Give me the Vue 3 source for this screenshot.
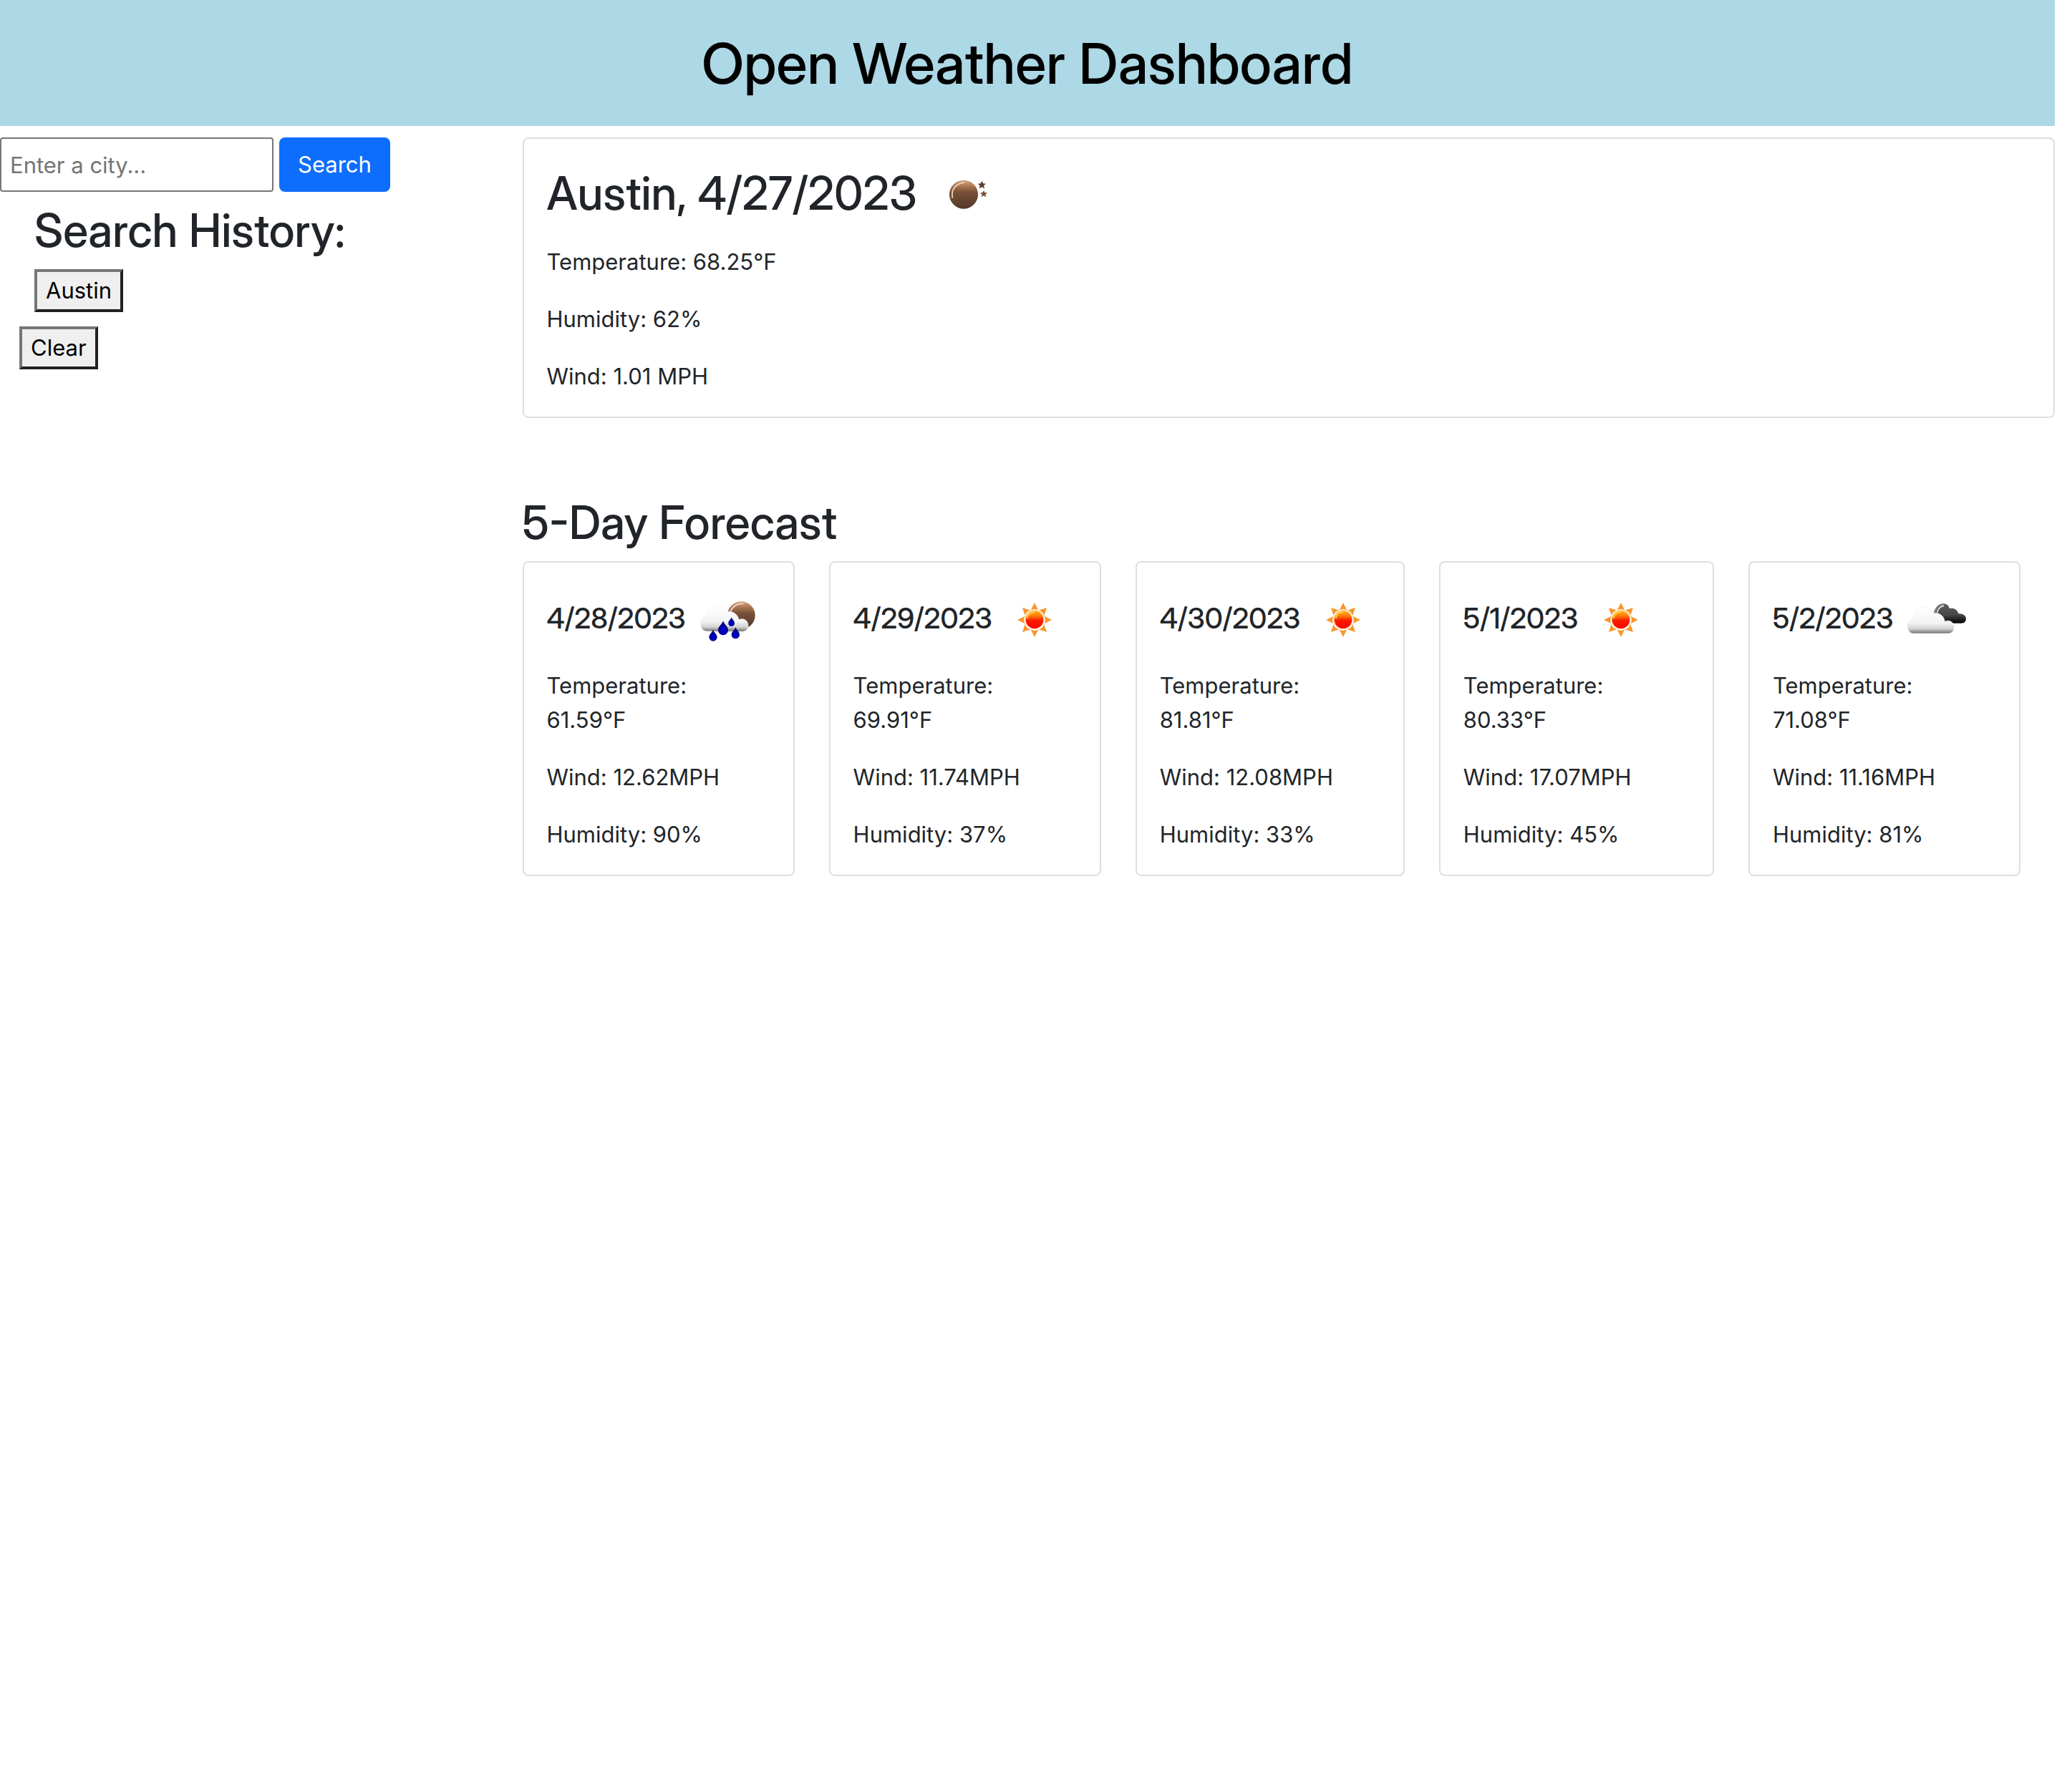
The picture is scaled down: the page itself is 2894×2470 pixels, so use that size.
<script setup>
import { ref } from 'vue'

const city = ref('')
const history = ref(['Austin'])

const current = { city: 'Austin', date: '4/27/2023', temp: '68.25', humidity: 62, wind: '1.01' }

const forecast = [
  { date: '4/28/2023', icon: 'rain', temp: '61.59', wind: '12.62', humidity: 90 },
  { date: '4/29/2023', icon: 'sun', temp: '69.91', wind: '11.74', humidity: 37 },
  { date: '4/30/2023', icon: 'sun', temp: '81.81', wind: '12.08', humidity: 33 },
  { date: '5/1/2023', icon: 'sun', temp: '80.33', wind: '17.07', humidity: 45 },
  { date: '5/2/2023', icon: 'clouds', temp: '71.08', wind: '11.16', humidity: 81 },
]

const rays = [0, 45, 90, 135, 180, 225, 270, 315]

function search() {
  const name = city.value.trim()
  if (name && !history.value.includes(name)) history.value.push(name)
  city.value = ''
}
</script>

<template>
  <div class="page">
    <svg class="defs" aria-hidden="true">
      <defs>
        <linearGradient id="moon" x1="0" y1="0" x2="0" y2="1">
          <stop offset="0" stop-color="#dba680" />
          <stop offset=".22" stop-color="#a87450" />
          <stop offset=".42" stop-color="#775037" />
          <stop offset="1" stop-color="#51382a" />
        </linearGradient>
        <linearGradient id="sun" x1="0" y1="0" x2="0" y2="1">
          <stop offset="0" stop-color="#ffb81c" />
          <stop offset=".3" stop-color="#ff7a08" />
          <stop offset=".55" stop-color="#fb1a04" />
          <stop offset="1" stop-color="#ff0000" />
        </linearGradient>
        <linearGradient id="cloud" x1="0" y1="0" x2="0" y2="1">
          <stop offset="0" stop-color="#ffffff" />
          <stop offset=".6" stop-color="#f4f4f4" />
          <stop offset=".82" stop-color="#d4d4d4" />
          <stop offset="1" stop-color="#6c6c6c" />
        </linearGradient>
        <linearGradient id="dark" x1="0" y1="0" x2="0" y2="1">
          <stop offset="0" stop-color="#606060" />
          <stop offset=".6" stop-color="#444444" />
          <stop offset="1" stop-color="#000000" />
        </linearGradient>
        <radialGradient id="drop" cx=".5" cy=".65" r=".5">
          <stop offset="0" stop-color="#0000e8" />
          <stop offset="1" stop-color="#000078" />
        </radialGradient>
        <filter id="soft" x="-10%" y="-10%" width="120%" height="120%">
          <feGaussianBlur stdDeviation="2" />
        </filter>
      </defs>
    </svg>

    <header class="banner"><h1>Open Weather Dashboard</h1></header>

    <div class="columns">
      <aside class="sidebar">
        <form class="search" @submit.prevent="search">
          <input v-model="city" type="text" placeholder="Enter a city..." aria-label="City" />
          <button type="submit" class="primary">Search</button>
        </form>
        <section class="history">
          <h2>Search History:</h2>
          <button v-for="name in history" :key="name" type="button" class="plain">{{ name }}</button>
        </section>
        <button type="button" class="plain clear" @click="history = []">Clear</button>
      </aside>

      <main class="content">
        <article class="card">
          <h2 class="now">
            {{ current.city }}, {{ current.date }}
            <svg class="icon" viewBox="-24 -42 300 300" role="img" aria-label="Clear night">
              <g filter="url(#soft)">
                <circle cx="126" cy="95" r="60" fill="url(#moon)" />
                <path d="M79 110C72 76 92 48 130 45" fill="none" stroke="#e6c9b5" stroke-width="6" />
                <path d="M202 38l5 11 12 1-9 8 3 12-11-6-11 6 3-12-9-8 12-1z" fill="#5f3c29" />
                <path d="M210 77l4 10 11 1-8 7 3 11-10-6-10 6 3-11-8-7 11-1z" fill="#7a4e36" />
              </g>
            </svg>
          </h2>
          <p>Temperature: {{ current.temp }}°F</p>
          <p>Humidity: {{ current.humidity }}%</p>
          <p>Wind: {{ current.wind }} MPH</p>
        </article>

        <section class="forecast">
          <h2>5-Day Forecast</h2>
          <div class="days">
            <article v-for="day in forecast" :key="day.date" class="card">
              <h3>
                {{ day.date }}
                <svg v-if="day.icon === 'rain'" class="icon" viewBox="18 -36 300 300" role="img" aria-label="Rain">
                  <g filter="url(#soft)">
                    <circle cx="223" cy="89" r="58" fill="url(#moon)" />
                    <path d="M174 84C182 54 204 40 232 40" fill="none" stroke="#ecd6c8" stroke-width="6" />
                    <path d="M80 156C62 156 52 142 52 124C52 108 64 98 76 96C76 68 94 48 117 48C136 48 149 58 156 74C184 68 208 82 213 107C234 98 252 112 252 132C252 148 240 157 228 157Z" fill="url(#cloud)" stroke="#f2f2f2" stroke-width="2" />
                    <path d="M105 149C109 162 122 168 122 180A17 17 0 0 1 88 180C88 168 101 162 105 149Z" fill="url(#drop)" />
                    <path d="M147 112C152 128 168 136 168 151A21 21 0 0 1 126 151C126 136 142 128 147 112Z" fill="url(#drop)" />
                    <path d="M182 97C185 107 195 112 195 122A13 13 0 0 1 169 122C169 112 179 107 182 97Z" fill="url(#drop)" />
                    <path d="M199 139C203 152 216 158 216 170A17 17 0 0 1 182 170C182 158 195 152 199 139Z" fill="url(#drop)" />
                  </g>
                </svg>
                <svg v-else-if="day.icon === 'sun'" class="icon" viewBox="-18 -36 300 300" role="img" aria-label="Clear">
                  <g filter="url(#soft)">
                    <path v-for="angle in rays" :key="angle" d="M132 36L148 68Q132 58 116 68Z" fill="#f9952a" :transform="`rotate(${angle} 132 108)`" />
                    <circle cx="132" cy="107" r="39" fill="url(#sun)" stroke="#ffe2b8" stroke-width="4" />
                    <path d="M102 102C102 86 114 76 132 75" fill="none" stroke="#ffd23c" stroke-width="6" />
                  </g>
                </svg>
                <svg v-else class="icon" viewBox="12 -36 300 300" role="img" aria-label="Broken clouds">
                  <g filter="url(#soft)">
                    <path d="M153 80C158 54 176 39 194 40C208 41 216 49 218 60C238 56 252 66 256 82C274 80 288 90 288 103C288 115 280 122 268 122H215L160 100Z" fill="url(#dark)" />
                    <path d="M149 78H158C161 60 174 46 194 44" fill="none" stroke="#8c8c8c" stroke-width="5" />
                    <path d="M167 80C168 64 180 51 195 49" fill="none" stroke="#ededed" stroke-width="5" />
                    <path d="M68 165C52 165 42 150 42 131C42 114 54 104 66 100C68 72 88 54 112 54C132 54 146 64 153 80C178 78 196 92 199 115C220 104 238 120 238 139C238 154 228 165 214 165Z" fill="url(#cloud)" stroke="#f0f0f0" stroke-width="2" />
                  </g>
                </svg>
              </h3>
              <p>Temperature: {{ day.temp }}°F</p>
              <p>Wind: {{ day.wind }}MPH</p>
              <p>Humidity: {{ day.humidity }}%</p>
            </article>
          </div>
        </section>
      </main>
    </div>
  </div>
</template>

<style>
body {
  background: #fff;
}
</style>

<style scoped>
.page {
  padding-right: 24px;
  color: #212529;
  font: 400 31px/48px Inter, "Liberation Sans", sans-serif;
}
.page * {
  box-sizing: border-box;
}
.defs {
  position: absolute;
  width: 0;
  height: 0;
}
h1, h2, h3, p {
  margin: 0;
}
h1, h2, h3 {
  font-family: "Inter Display", Inter, "Liberation Sans", sans-serif;
  font-weight: 500;
}
.banner {
  padding: 40px 0;
  background: #add8e6;
  color: #000;
  text-align: center;
}
h1 {
  font-size: 79px;
  line-height: 96px;
}
h2 {
  margin-bottom: 16px;
  font-size: 64px;
  line-height: 76px;
}
h3 {
  margin-bottom: 16px;
  font-size: 40px;
  line-height: 48px;
  white-space: nowrap;
}
.columns {
  display: grid;
  grid-template-columns: 1fr 3fr;
  column-gap: 16px;
  padding-top: 16px;
}
.search {
  display: flex;
  gap: 8px;
  margin-bottom: 16px;
}
input, button {
  font: inherit;
}
input {
  width: 382px;
  height: 76px;
  padding: 0 12px;
  border: 2px solid #767676;
  border-radius: 4px;
  background: #fff;
}
input::placeholder {
  color: #757575;
  opacity: 1;
}
.primary {
  padding: 12px 24px;
  border: 2px solid #0d6efd;
  border-radius: 8px;
  background: #0d6efd;
  color: #fff;
}
.history {
  padding-left: 48px;
}
.plain {
  display: block;
  padding: 2px 12px;
  border: 4px solid;
  border-color: #767676 #212121 #212121 #767676;
  border-radius: 0;
  background: #efefef;
  color: #000;
}
.clear {
  margin: 20px 0 0 27px;
}
.card {
  padding: 32px;
  border: 2px solid #dfdfdf;
  border-radius: 8px;
}
.card p + p {
  margin-top: 32px;
}
.now {
  white-space: nowrap;
}
.icon {
  width: 100px;
  height: 100px;
  vertical-align: middle;
}
.forecast {
  margin-top: 108px;
}
.days {
  display: grid;
  grid-template-columns: 95fr 95fr 94fr 96fr 95fr;
  gap: 48px;
  padding-right: 48px;
}
</style>
